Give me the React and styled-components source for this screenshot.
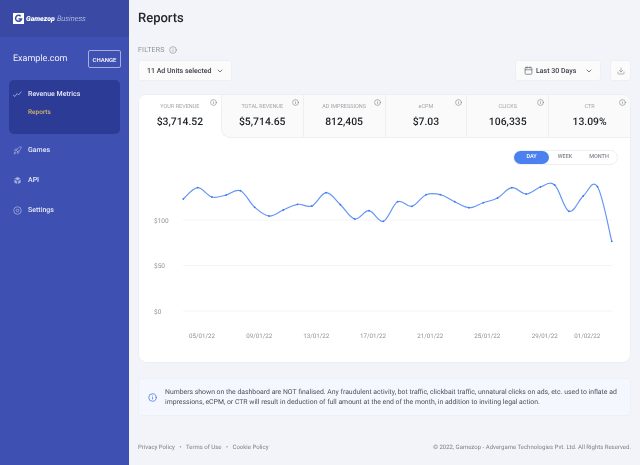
import React from "react";
import styled, { createGlobalStyle } from "styled-components";
import { ChevronDown, Info, Download, Calendar, Rocket } from "lucide-react";

const Global = createGlobalStyle`
  html, body { margin: 0; padding: 0; background: #f3f4f9; }
  * { box-sizing: border-box; }
  body { font-family: Roboto, "Liberation Sans", sans-serif; -webkit-font-smoothing: antialiased; text-rendering: geometricPrecision; }
`;

const Page = styled.div`
  display: flex;
  width: 640px;
  height: 465px;
  overflow: hidden;
  will-change: transform;
`;
const Sidebar = styled.aside`
  width: 129px;
  flex: none;
  background: #3e50b2;
  color: #fff;
  display: flex;
  flex-direction: column;
`;
const Brand = styled.div`
  height: 37px;
  background: #3a4aa4;
  display: flex;
  align-items: center;
  padding: 0 0 0 13px;
  gap: 2px;
`;
const LogoMark = styled.svg`
  width: 11px;
  height: 11px;
  flex: none;
`;
const BrandName = styled.span`
  font-size: 7px;
  font-weight: 900;
  font-style: italic;
  color: #fff;
`;
const BrandSub = styled.span`
  font-size: 7.5px;
  font-weight: 300;
  font-style: italic;
  color: #d6daf0;
`;
const Site = styled.div`
  display: flex;
  align-items: center;
  justify-content: space-between;
  padding: 13px 8px 0 13px;
`;
const SiteName = styled.span`
  font-size: 9px;
  font-weight: 400;
  color: #eef0fa;
`;
const ChangeButton = styled.button`
  width: 33px;
  height: 18px;
  padding: 0;
  background: transparent;
  border: 1px solid #a5aedd;
  border-radius: 2px;
  color: #fff;
  font: 500 6px Roboto, sans-serif;
`;
const ActiveGroup = styled.div`
  margin: 12px 9px 0;
  height: 54px;
  background: #2b3b96;
  border-radius: 5px;
  padding: 8px 4px;
`;
const NavRow = styled.div`
  display: flex;
  align-items: center;
  gap: 6px;
  height: 12px;
  font-size: 7px;
  font-weight: 500;
  color: #e4e7f7;
  padding-left: ${p => p.$pad || 0}px;
  margin-top: ${p => p.$top || 0}px;
  svg { flex: none; color: #aab2e2; }
`;
const SubItem = styled.div`
  font-size: 6.5px;
  font-weight: 500;
  line-height: 8px;
  color: #d9b765;
  margin: 8px 0 0 15px;
`;
const Main = styled.main`
  flex: 1;
  min-width: 0;
  padding: 0 9px 0 9px;
  display: flex;
  flex-direction: column;
`;
const Title = styled.h1`
  margin: 10px 0 0;
  font-size: 13px;
  line-height: 18px;
  font-weight: 500;
  color: #23272f;
`;
const FiltersLabel = styled.div`
  margin-top: 17px;
  display: flex;
  align-items: center;
  gap: 4px;
  height: 10px;
  font-size: 7px;
  font-weight: 400;
  color: #8d9199;
  letter-spacing: .2px;
`;
const Controls = styled.div`
  display: flex;
  align-items: center;
  margin-top: 5px;
  gap: 9px;
`;
const Select = styled.div`
  height: 21px;
  width: ${p => p.$w}px;
  background: #fbfbfc;
  border: 1px solid #eeeff3;
  border-radius: 3px;
  display: flex;
  align-items: center;
  justify-content: space-between;
  padding: 0 7px 0 8px;
  font-size: 7px;
  font-weight: 500;
  color: #3c4048;
  white-space: nowrap;
`;
const SelectLabel = styled.span`
  display: flex;
  align-items: center;
  gap: 3px;
`;
const Spacer = styled.div`
  flex: 1;
`;
const IconButton = styled.div`
  width: 21px;
  height: 21px;
  background: #fbfbfc;
  border: 1px solid #eeeff3;
  border-radius: 3px;
  display: flex;
  align-items: center;
  justify-content: center;
  color: #8d9199;
`;
const Card = styled.section`
  margin-top: 13px;
  height: 269px;
  background: #fff;
  border: 1px solid #eceef2;
  border-radius: 9px;
  overflow: hidden;
  display: flex;
  flex-direction: column;
`;
const Tabs = styled.div`
  display: grid;
  grid-template-columns: repeat(6, 1fr);
  height: 43px;
  flex: none;
  background: #fff;
`;
const Tab = styled.div`
  position: relative;
  background: ${p => (p.$active ? "#fff" : "#fafafa")};
  border-left: ${p => (p.$active || p.$first ? "0" : "1px solid #eeeff2")};
  border-bottom: ${p => (p.$active ? "0" : "1px solid #eeeff2")};
  border-bottom-left-radius: ${p => (p.$first ? "9px" : "0")};
  ${p => p.$first && "border-left: 1px solid #eeeff2;"}
  text-align: center;
  padding-top: 8px;
`;
const TabInfo = styled.span`
  position: absolute;
  top: 4px;
  right: 4px;
  color: #73777f;
  display: flex;
`;
const TabLabel = styled.div`
  font-size: 5.5px;
  line-height: 8px;
  color: #a2a5ab;
`;
const TabValue = styled.div`
  margin-top: 3px;
  font-size: 10.4px;
  line-height: 15px;
  font-weight: 500;
  color: #1f2329;
`;
const ChartArea = styled.div`
  position: relative;
  flex: 1;
`;
const Range = styled.div`
  position: absolute;
  top: 12px;
  right: 12px;
  width: 105px;
  height: 15px;
  border: 1px solid #eeeff2;
  border-radius: 8px;
  display: flex;
  align-items: center;
`;
const RangeOption = styled.div`
  width: ${p => p.$w}px;
  height: 13px;
  border-radius: 7px;
  background: ${p => (p.$active ? "#4a80f0" : "transparent")};
  color: ${p => (p.$active ? "#fff" : "#85888f")};
  font-size: 5.5px;
  font-weight: 500;
  line-height: 13px;
  text-align: center;
`;
const ChartSvg = styled.svg`
  display: block;
  width: 491px;
  height: 225px;
  font-family: Roboto, sans-serif;
`;
const Notice = styled.div`
  margin-top: 15px;
  height: 38px;
  background: #f4f7fe;
  border: 1px solid #eef0f6;
  border-radius: 3px;
  display: flex;
  align-items: center;
  gap: 8px;
  padding: 0 8px 0 9px;
  color: #3f78e0;
`;
const NoticeText = styled.p`
  margin: 0;
  font-size: 6.86px;
  line-height: 10.5px;
  color: #4b4f57;
  white-space: nowrap;
`;
const Footer = styled.footer`
  margin-top: 27px;
  display: flex;
  justify-content: space-between;
  font-size: 6px;
  line-height: 10px;
  color: #7d8087;
`;
const FooterLinks = styled.div`
  display: flex;
  gap: 4.5px;
`;

const pts = [199,187.7,197,195,190.7,207.3,216,210,204.3,206,192.7,204.7,219,210.7,221.3,201.7,206.3,194.7,194.7,201.7,207.7,202.7,198,187.7,194,187,185,211.3,196,186.7,241.3]
  .map((y, i) => [44.3 + i * 14.283, y - 138]);

function smooth(p) {
  let d = `M${p[0][0]} ${p[0][1]}`;
  for (let i = 0; i < p.length - 1; i++) {
    const a = p[Math.max(i - 1, 0)], b = p[i], c = p[i + 1], e = p[Math.min(i + 2, p.length - 1)];
    const k = 0.18;
    d += ` C${b[0] + (c[0] - a[0]) * k} ${b[1] + (c[1] - a[1]) * k} ${c[0] - (e[0] - b[0]) * k} ${c[1] - (e[1] - b[1]) * k} ${c[0]} ${c[1]}`;
  }
  return d;
}

const metrics = [
  ["YOUR REVENUE", "$3,714.52"],
  ["TOTAL REVENUE", "$5,714.65"],
  ["AD IMPRESSIONS", "812,405"],
  ["eCPM", "$7.03"],
  ["CLICKS", "106,335"],
  ["CTR", "13.09%"],
];
const yTicks = [["$100", 82], ["$50", 127.5], ["$0", 173]];
const xTicks = [["05/01/22", 63], ["09/01/22", 120.3], ["13/01/22", 177.3], ["17/01/22", 234], ["21/01/22", 291.3], ["25/01/22", 348.3], ["29/01/22", 405.7], ["01/02/22", 448.3]];

function Logo() {
  return (
    <LogoMark viewBox="0 0 22 22">
      <rect width="22" height="22" fill="#fff" />
      <path d="M15.5 6.5A6 6 0 1 0 17 12h-6" fill="none" stroke="#3a4aa4" strokeWidth="3" />
    </LogoMark>
  );
}
function TrendIcon() {
  return (
    <svg width="9" height="8" viewBox="0 0 18 16" fill="none" stroke="currentColor" strokeWidth="1.6">
      <path d="M0 10l4 3 4-6 3 3 6-7" />
    </svg>
  );
}
function ApiIcon() {
  return (
    <svg width="9" height="9" viewBox="0 0 24 24" fill="currentColor" stroke="#3e50b2" strokeWidth="1">
      <path d="M12 2l9 5-9 5-9-5z" />
      <path d="M3 9l8 4.5V22l-8-4.5z" />
      <path d="M21 9l-8 4.5V22l8-4.5z" />
    </svg>
  );
}
function SettingsIcon() {
  return (
    <svg width="9" height="9" viewBox="0 0 24 24" fill="none" stroke="currentColor" strokeWidth="2">
      <circle cx="12" cy="12" r="10" />
      <circle cx="12" cy="12" r="3.5" />
    </svg>
  );
}

export default function App() {
  return (
    <Page>
      <Global />
      <Sidebar>
        <Brand>
          <Logo />
          <BrandName>Gamezop</BrandName>
          <BrandSub>Business</BrandSub>
        </Brand>
        <Site>
          <SiteName>Example.com</SiteName>
          <ChangeButton>CHANGE</ChangeButton>
        </Site>
        <ActiveGroup>
          <NavRow>
            <TrendIcon />
            Revenue Metrics
          </NavRow>
          <SubItem>Reports</SubItem>
        </ActiveGroup>
        <NavRow $pad={13} $top={10}>
          <Rocket size={9} strokeWidth={1.6} />
          Games
        </NavRow>
        <NavRow $pad={13} $top={18}>
          <ApiIcon />
          API
        </NavRow>
        <NavRow $pad={13} $top={18}>
          <SettingsIcon />
          Settings
        </NavRow>
      </Sidebar>
      <Main>
        <Title>Reports</Title>
        <FiltersLabel>
          FILTERS
          <Info size={8} strokeWidth={1.5} color="#6d7178" />
        </FiltersLabel>
        <Controls>
          <Select $w={94}>
            11 Ad Units selected
            <ChevronDown size={8} />
          </Select>
          <Spacer />
          <Select $w={86}>
            <SelectLabel>
              <Calendar size={9} strokeWidth={2} color="#6d7178" />
              Last 30 Days
            </SelectLabel>
            <ChevronDown size={8} />
          </Select>
          <IconButton>
            <Download size={8} />
          </IconButton>
        </Controls>
        <Card>
          <Tabs>
            {metrics.map(([l, v], i) => (
              <Tab key={l} $active={i === 0} $first={i === 1}>
                <TabInfo>
                  <Info size={7} strokeWidth={1.8} />
                </TabInfo>
                <TabLabel>{l}</TabLabel>
                <TabValue>{v}</TabValue>
              </Tab>
            ))}
          </Tabs>
          <ChartArea>
            <Range>
              <RangeOption $active $w={35}>DAY</RangeOption>
              <RangeOption $w={32}>WEEK</RangeOption>
              <RangeOption $w={36}>MONTH</RangeOption>
            </Range>
            <ChartSvg viewBox="0 0 491 225">
              {yTicks.map(([t, y]) => (
                <g key={t}>
                  <line x1="44" x2="473" y1={y} y2={y} stroke="#f3f4f7" strokeWidth="1" />
                  <text x="15" y={y + 2.5} fontSize="6.5" fill="#8d9096">{t}</text>
                </g>
              ))}
              {xTicks.map(([t, x]) => (
                <text key={t} x={x} y={200} fontSize="6.2" fill="#8d9096" textAnchor="middle">{t}</text>
              ))}
              <path d={smooth(pts)} fill="none" stroke="#6496f6" strokeWidth="1.2" />
              {pts.map(([x, y], i) => (
                <circle key={i} cx={x} cy={y} r="0.9" fill="#3f78ee" />
              ))}
            </ChartSvg>
          </ChartArea>
        </Card>
        <Notice>
          <Info size={9} strokeWidth={2} style={{ flex: "none" }} />
          <NoticeText>
            Numbers shown on the dashboard are NOT finalised. Any fraudulent activity, bot traffic, clickbait traffic, unnatural clicks on ads, etc. used to inflate ad<br />
            impressions, eCPM, or CTR will result in deduction of full amount at the end of the month, in addition to inviting legal action.
          </NoticeText>
        </Notice>
        <Footer>
          <FooterLinks>
            <span>Privacy Policy</span><span>•</span><span>Terms of Use</span><span>•</span><span>Cookie Policy</span>
          </FooterLinks>
          <span>© 2022, Gamezop - Advergame Technologies Pvt. Ltd. All Rights Reserved.</span>
        </Footer>
      </Main>
    </Page>
  );
}
